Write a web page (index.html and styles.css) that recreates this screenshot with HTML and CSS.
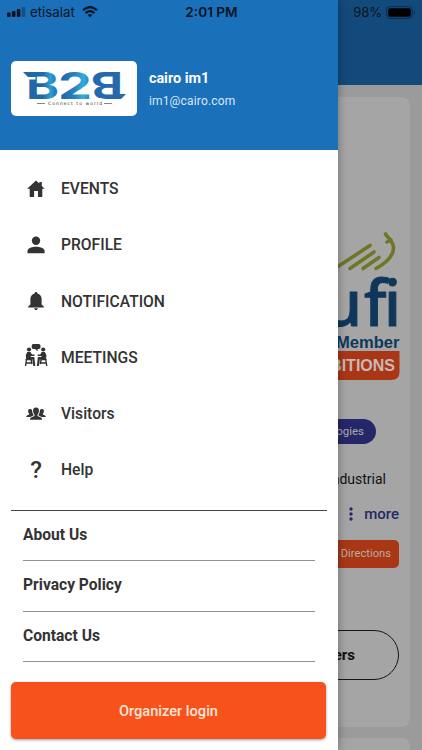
FILE: index.html
```html
<!DOCTYPE html>
<html lang="en">
<head>
<meta charset="utf-8">
<title>B2B</title>
<link rel="stylesheet" href="styles.css">
</head>
<body>
<div class="screen">
  <main class="page">
    <div class="page-header"></div>
    <section class="card">
      <svg class="ufi" width="110" height="154" viewBox="290 229 110 154">
        <g fill="none" stroke="#707527" stroke-width="3.6" stroke-linecap="round">
          <path d="M325 275 L370 245.500"/>
          <path d="M350 268.500 L374 252"/>
          <path d="M363 268.500 L379 257.500"/>
          <path d="M376 268.500 C386 263 394 256 393.500 247 C393 241 388 238 385.500 234 M387 242 L391 240"/>
        </g>
        <text class="ufi-name" x="322.500 364 384" y="326">ufi</text>
        <text class="ufi-member" x="336" y="347.500" textLength="63.500" lengthAdjust="spacingAndGlyphs">Member</text>
        <path d="M290 351 H399.500 V372 Q399.500 380 391 380 H290 Z" fill="#a93716"/>
        <text class="ufi-band" x="395" y="370.500" text-anchor="end">EXHIBITIONS</text>
      </svg>
      <div class="tag">Technologies</div>
      <div class="industry">Industrial</div>
      <div class="more"><svg width="6" height="16" viewBox="0 0 6 16" fill="#252865"><circle cx="3" cy="3" r="1.700"/><circle cx="3" cy="8" r="1.700"/><circle cx="3" cy="13" r="1.700"/></svg><span>more</span></div>
      <div class="directions">Directions</div>
      <div class="outline">Organizers</div>
    </section>
    <section class="card-next"></section>
  </main>

  <aside class="drawer">
    <header class="profile">
      <div class="logo">
        <svg width="126" height="55" viewBox="11 61 126 55">
          <defs>
            <linearGradient id="brand" gradientUnits="userSpaceOnUse" x1="24" y1="0" x2="126" y2="0">
              <stop offset="0" stop-color="#2268a9"/><stop offset=".18" stop-color="#2068a8"/><stop offset=".26" stop-color="#2d9dcf"/><stop offset=".35" stop-color="#1d62aa"/><stop offset=".5" stop-color="#2b83c0"/><stop offset=".58" stop-color="#34acd9"/><stop offset=".7" stop-color="#2266aa"/><stop offset="1" stop-color="#2868a8"/>
            </linearGradient>
            <linearGradient id="brand-turned" gradientUnits="userSpaceOnUse" x1="-126" y1="0" x2="-90" y2="0">
              <stop offset="0" stop-color="#2868a8"/><stop offset="1" stop-color="#2269b2"/>
            </linearGradient>
          </defs>
          <g class="logo-name" fill="url(#brand)">
            <text x="26" y="99" textLength="33" lengthAdjust="spacingAndGlyphs">B</text>
            <text x="58" y="99" textLength="34" lengthAdjust="spacingAndGlyphs">2</text>
            <text x="-123" y="-72" textLength="32" lengthAdjust="spacingAndGlyphs" transform="rotate(180)" fill="url(#brand-turned)">B</text>
            <path d="M23 72 H34 V77 H28 Z M115 94 H126 L121 99 H115 Z"/>
          </g>
          <path d="M27 77 H35.500 V79.500 H27 Z" fill="#fff"/>
          <path d="M37 103.500 H45 M104 103.500 H112" stroke="#666" stroke-width=".8"/>
          <text class="logo-sub" x="48" y="105" textLength="54">Connect to world</text>
        </svg>
      </div>
      <div class="who"><strong>cairo im1</strong><span>im1@cairo.com</span></div>
    </header>

    <nav class="menu">
      <a class="item"><svg class="icon" viewBox="0 0 24 24"><path d="M12 3.500 3.200 11.700H5.700V20.100H10.100V14H14V20.100H18.300V11.700H20.700L17.800 9V5H15.300V6.600Z"/></svg><span>EVENTS</span></a>
      <a class="item"><svg class="icon" viewBox="0 0 24 24"><circle cx="12" cy="7.700" r="4.200"/><path d="M3.500 20.300V18C3.500 15 8.600 13.700 12 13.700S20.600 15 20.600 18V20.300Z"/></svg><span>PROFILE</span></a>
      <a class="item"><svg class="icon" viewBox="0 0 24 24"><path d="M12 3.100C12.900 3.100 13.400 3.700 13.400 4.500C16 5.200 17.600 7.300 17.600 10V15.600L19.800 17.500V18.500H4.200V17.500L6.400 15.600V10C6.400 7.300 8 5.200 10.600 4.500C10.600 3.700 11.100 3.100 12 3.100ZM10.100 19.300H13.900C13.700 20.500 13 21.100 12 21.100S10.300 20.500 10.100 19.300Z"/></svg><span>NOTIFICATION</span></a>
      <a class="item"><svg class="icon" viewBox="0 0 24 24"><path d="M9.200-1H14.800Q16.500-1 16.500 .7V2.200Q16.500 3.900 14.800 3.900H13.500L13.800 6.200L11 3.900H9.200Q7.700 3.900 7.700 2.200V.7Q7.700-1 9.200-1Z"/><circle cx="5" cy="4.500" r="2.100"/><circle cx="19.200" cy="4.500" r="2.100"/><path d="M3.300 7H6.500L8 9.500H10.500V11H6.800V12H10.300L11.300 21H9.300L8.300 14.200H2.200L1.800 10ZM20.900 7H17.700L16.200 9.500H13.700V11H17.400V12H13.900L12.900 21H14.900L15.900 14.200H22L22.400 10Z"/><path d="M1.500 14.500H8M2.500 14.500 1.500 21M7 14.500 8 19M2 18H7.500M22.700 14.500H16.200M21.700 14.500 22.800 21M17.200 14.500 16.200 19M22.200 18H16.700" fill="none" stroke="#333" stroke-width="1.400"/></svg><span>MEETINGS</span></a>
      <a class="item"><svg class="icon" viewBox="0 0 24 24"><path d="M12 5.400C14.200 5.400 15.100 6.900 14.900 9C14.800 10.700 14.200 12 13.500 12.600V14L17 15.500Q18 16 18 17.800H6Q6 16 7 15.500L10.500 14V12.600C9.800 12 9.200 10.700 9.100 9C8.900 6.900 9.800 5.400 12 5.400Z"/><path d="M6.200 7C7.500 7 8.100 7.900 8.200 9.200Q8.200 11.500 9.400 12.600V13.400L6.300 14.900H2.200Q2.200 13.800 3.400 13.300L5.200 12.500V11.700Q3.900 10.500 4.100 8.700C4.200 7.600 5 7 6.200 7ZM17.800 7C16.500 7 15.900 7.900 15.800 9.200Q15.800 11.500 14.600 12.600V13.400L17.700 14.900H21.800Q21.800 13.800 20.600 13.300L18.800 12.500V11.700Q20.100 10.500 19.900 8.700C19.800 7.600 19 7 17.800 7Z"/></svg><span>Visitors</span></a>
      <a class="item"><span class="icon question">?</span><span>Help</span></a>
    </nav>

    <div class="links">
      <a>About Us</a>
      <a>Privacy Policy</a>
      <a>Contact Us</a>
    </div>
    <button class="login">Organizer login</button>
  </aside>

  <div class="status">
    <div class="carrier">
      <svg width="19" height="10" viewBox="0 0 19 10"><rect x="0" y="5.500" width="3.600" height="4.500" rx="1"/><rect x="4.900" y="4" width="3.600" height="6" rx="1"/><rect x="9.800" y="2" width="3.600" height="8" rx="1"/><rect x="14.700" y="0" width="3.600" height="10" rx="1" opacity=".35"/></svg>
      <span>etisalat</span>
      <svg class="wifi" width="16" height="12" viewBox="0 0 16 12"><g fill="none" stroke="#071522" stroke-width="2.200"><path d="M1 4.300Q8-2.200 15 4.300M3.600 7.100Q8 3.100 12.400 7.100"/></g><path d="M5.700 8.900Q8 7 10.300 8.900L8 11.300Z"/></svg>
    </div>
    <div class="time">2:01 PM</div>
    <div class="battery"><span>98%</span><svg width="30" height="13" viewBox="0 0 30 13"><rect x=".6" y=".6" width="25.800" height="11.800" rx="3.200" fill="none" stroke="#0b2d4c" stroke-width="1"/><rect x="2.200" y="2.200" width="22.600" height="8.600" rx="1.800" fill="#000"/><path d="M28 4.500Q30 6.500 28 8.500Z" fill="#0b2d4c"/></svg></div>
  </div>
</div>
</body>
</html>
```
FILE: styles.css
```css
* { box-sizing: border-box; }
body { margin: 0; font-family: Roboto, "Liberation Sans", sans-serif; }
.screen { position: relative; width: 422px; height: 750px; overflow: hidden; background: #9b9b9b; }

.page { display: flex; flex-direction: column; height: 750px; }
.page-header { flex: none; height: 85px; background: #124a7c; }
.card { flex: none; display: flex; flex-direction: column; align-items: flex-end; height: 630px; margin: 12px 12px 0; padding: 132px 11px 0; border-radius: 8px; background: #a5a5a5; }
.card-next { flex: none; height: 60px; margin: 11px 12px 0; border-radius: 8px; background: #a5a5a5; }
.ufi { flex: none; display: block; margin-right: -1px; overflow: visible; }
.ufi-name { font: 500 63px "Noto Sans", sans-serif; fill: #10375a; stroke: #10375a; stroke-width: 1px; stroke-linejoin: round; }
.ufi-member { font: 700 17px "Liberation Sans", sans-serif; fill: #10375a; }
.ufi-band { font: 700 16px "Liberation Sans", sans-serif; fill: #c5b9b5; }
.tag { height: 25px; margin: 36px 23px 0 0; padding: 0 12px; border-radius: 13px; background: #252868; color: #aaa; font-size: 11.5px; line-height: 25px; }
.industry { margin: 26px 13px 0 0; color: #111; font-size: 14px; line-height: 18px; }
.more { display: flex; align-items: center; gap: 10px; margin-top: 16px; color: #252865; font-size: 15px; font-weight: 500; line-height: 20px; }
.directions { height: 28px; margin-top: 16px; padding: 0 8px; width: 90px; border-radius: 5px; background: #a93716; color: #b9aaa5; font-size: 11.2px; line-height: 28px; text-align: right; }
.outline { width: 180px; height: 50px; margin-top: 62px; padding-right: 43px; border: 1px solid #161616; border-radius: 25px; color: #111; font-size: 15px; font-weight: 700; line-height: 48px; text-align: right; }

.drawer { position: absolute; top: 0; left: 0; width: 337.500px; height: 750px; background: #fff; box-shadow: 0 0 9px rgba(0, 0, 0, .35); }
.profile { display: flex; align-items: flex-start; height: 150px; padding: 61px 11px 0; background: #1b70ba; color: #fff; }
.logo { width: 126.400px; height: 55px; border-radius: 5px; background: #fff; }
.logo svg { display: block; }
.logo-name { font: 700 37px Inter, sans-serif; }
.logo-sub { font: 4.5px "DejaVu Sans", sans-serif; fill: #333; }
.who { display: flex; flex-direction: column; margin: 8px 0 0 11.500px; }
.who strong { font-size: 14.4px; font-weight: 700; line-height: 19px; }
.who span { margin-top: 5px; color: #d6e9f8; font-size: 12px; line-height: 16px; letter-spacing: .18px; }

.menu { padding: 10.500px 24px 0; }
.item { display: flex; align-items: center; gap: 13px; height: 56.250px; color: #333; font-size: 15.650px; font-weight: 500; }
.icon { flex: none; width: 24px; height: 24px; fill: #333; overflow: visible; }
.question { font-size: 24px; line-height: 24px; text-align: center; }

.links { margin: 11.500px 11px 0; padding: 0 12px 0; border-top: 1px solid #444; }
.links a { display: block; height: 50.500px; border-bottom: 1px solid #929292; color: #333; font-size: 15.600px; font-weight: 700; line-height: 49px; }
.login { display: block; width: 315px; height: 57px; margin: 20px 11px 0; padding: 0; border: 0; border-radius: 5px; background: #f8521c; box-shadow: 0 1px 3px rgba(0, 0, 0, .4); color: #ffe6d9; font: 500 14.600px Roboto, sans-serif; }

.status { position: absolute; top: 0; left: 0; display: grid; grid-template-columns: 1fr auto 1fr; align-items: center; width: 422px; height: 24px; padding: 0 6px 0 7px; color: #071522; font: 13px Inter, sans-serif; }
.carrier { display: flex; align-items: center; gap: 4px; fill: #071522; }
.carrier span { font-size: 13.3px; }
.wifi { margin-left: 3px; }
.time { font-size: 13.600px; font-weight: 600; }
.battery { display: flex; align-items: center; justify-content: flex-end; gap: 4px; }
```
